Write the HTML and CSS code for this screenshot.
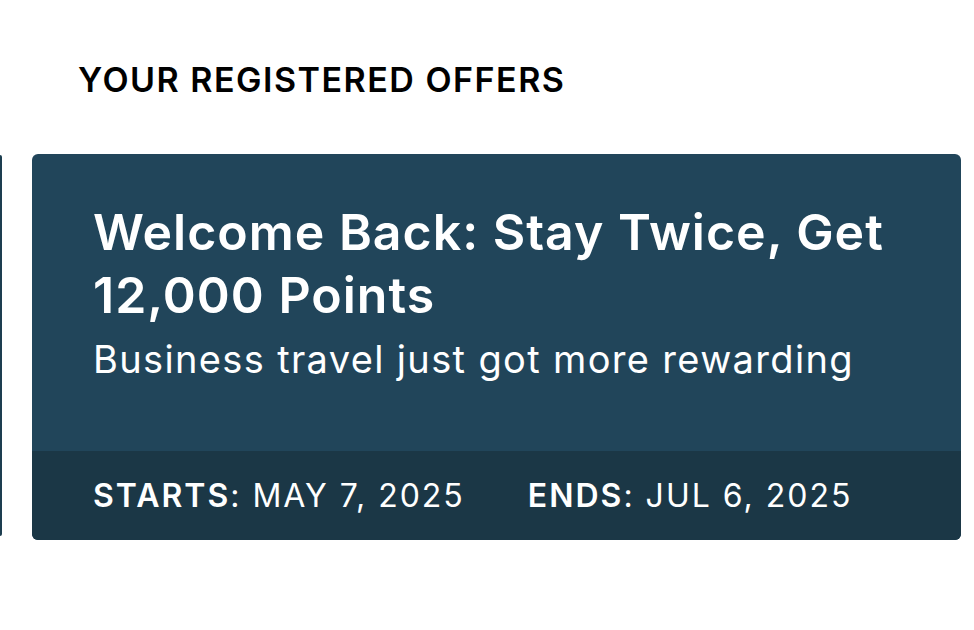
FILE: index.html
```html
<!DOCTYPE html>
<html lang="en">
<head>
<meta charset="utf-8">
<title>Your Registered Offers</title>
<link rel="stylesheet" href="styles.css">
</head>
<body>
<section class="offers">
  <h2 class="offers-title">YOUR REGISTERED OFFERS</h2>
  <div class="carousel">
    <div class="card card-prev" aria-hidden="true"></div>
    <article class="card">
      <div class="card-body">
        <h3 class="card-title">Welcome Back: Stay Twice, Get 12,000 Points</h3>
        <p class="card-sub">Business travel just got more rewarding</p>
      </div>
      <div class="card-foot">
        <span class="date"><b>STARTS</b>: MAY 7, 2025</span>
        <span class="date"><b>ENDS</b>: JUL 6, 2025</span>
      </div>
    </article>
  </div>
</section>
</body>
</html>
```
FILE: styles.css
```css
* { box-sizing: border-box; }
html, body { margin: 0; padding: 0; background: #fff; }
body {
  font-family: Inter, "Noto Sans", "Liberation Sans", sans-serif;
  color: #000;
  width: 974px;
  height: 630px;
  overflow: hidden;
}
.offers { padding-top: 60px; }
.offers-title {
  margin: 0 0 0 78px;
  font-size: 34px;
  font-weight: 600;
  letter-spacing: 1.5px;
  line-height: 40px;
}
.carousel {
  display: flex;
  gap: 30px;
  margin-top: 54px;
  align-items: flex-start;
}
.card {
  flex: 0 0 929px;
  width: 929px;
  height: 386px;
  border-radius: 6px;
  overflow: hidden;
  display: flex;
  flex-direction: column;
  background: #21455a;
  color: #fff;
}
.card-prev {
  flex: 0 0 2px;
  width: 2px;
  height: 381px;
  margin-top: 1px;
  border-radius: 0 4px 4px 0;
  background: #1d3e50;
}
.card-body {
  flex: 0 0 297px;
  padding: 47px 30px 0 61px;
}
.card-title {
  margin: 0;
  font-size: 50px;
  font-weight: 600;
  line-height: 63px;
  letter-spacing: 1px;
}
.card-sub {
  margin: 9px 0 0;
  font-size: 38px;
  font-weight: 400;
  line-height: 46px;
  letter-spacing: 1.35px;
}
.card-foot {
  flex: 1;
  background: #1b3746;
  display: flex;
  align-items: center;
  gap: 63px;
  padding: 0 0 0 61px;
  font-size: 32px;
  letter-spacing: 2px;
}
.date { font-weight: 400; }
.date b { font-weight: 600; }
```
